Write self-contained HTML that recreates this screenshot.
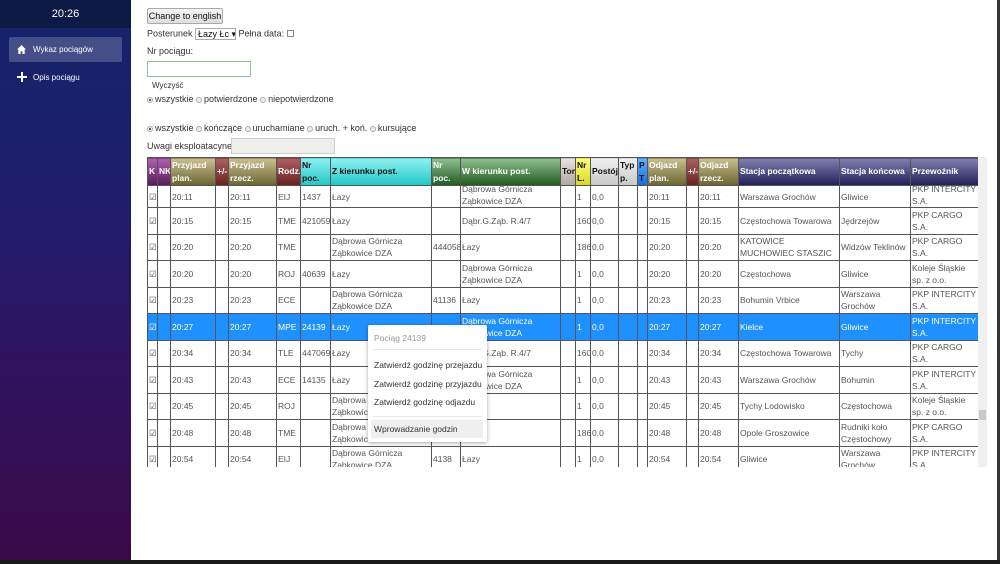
<!DOCTYPE html>
<html><head><meta charset="utf-8"><style>
*{box-sizing:border-box;margin:0;padding:0}
body{width:1000px;height:564px;overflow:hidden;background:#fff;font-family:"Liberation Sans",Arial,sans-serif;font-size:9px;color:#333;position:relative}
#side{position:absolute;left:0;top:0;width:131px;height:560px;background:linear-gradient(#14246a 0%,#1f1e6c 35%,#2f1460 65%,#3a0a47 100%)}
#side .hd{height:28px;background:#0d1a45;color:#fff;font-size:11px;text-align:center;line-height:28px}
.nav{position:absolute;left:9px;width:113px;height:25px;color:#fff;font-size:8px;line-height:25px;padding-left:24px;border-radius:2px}
.nav.a{background:rgba(255,255,255,0.2)}
#bot{position:absolute;left:0;top:560px;width:1000px;height:4px;background:#1a1a1a}
#rb{position:absolute;left:997px;top:0;width:3px;height:564px;background:#333}
.t{position:absolute;font-size:9px;color:#333;white-space:nowrap}
.btn{position:absolute;left:147px;top:8px;width:76px;height:16px;border:1px solid #aaa;background:linear-gradient(#f6f6f6,#dedede);font-size:9px;line-height:14px;text-align:center;border-radius:2px;color:#111}
.rad{display:inline-block;width:6px;height:6px;border:1px solid #aaa;border-radius:50%;vertical-align:-1px;margin-right:2px;background:#eee}
.rad.on{background:radial-gradient(#555 35%,#eee 45%)}
#tw{position:absolute;left:147px;top:157px;width:841px;height:310px;overflow:hidden}
table{border-collapse:collapse;table-layout:fixed;width:831px;font-size:8.5px}
td,th{border:1px solid #555;height:26.5px;padding:0 1px;overflow:hidden;white-space:nowrap;line-height:12px;color:#555;font-weight:normal;text-align:left}
th{height:28px;font-weight:bold;color:#fff;white-space:normal;vertical-align:middle;line-height:13px}
tr.f td{height:22px}
.cl{height:21px;overflow:hidden;display:flex;flex-direction:column;justify-content:flex-end}
td.w{white-space:normal}
tr.sel td{background:#1e90ff;color:#fff}
.pu{background:linear-gradient(#b060b0,#5a1a5a)}
.ol{background:linear-gradient(#c8c090,#6a6430)}
.mr{background:linear-gradient(#b06060,#6a2020)}
.cy{background:linear-gradient(#8ff0f0,#20c8c8);color:#111!important}
.gr{background:linear-gradient(#90c090,#1f5a1f)}
.gy{background:linear-gradient(#e8e4e0,#b0a8a0);color:#111!important}
.ye{background:linear-gradient(#ffff80,#d8d820);color:#111!important}
.lg{background:linear-gradient(#f0f0f0,#c8c8c8);color:#111!important}
.bl{background:linear-gradient(#60b0ff,#1070e0);color:#111!important}
.nv{background:linear-gradient(#8080b0,#20205a)}
#sb{position:absolute;left:978px;top:157px;width:9px;height:310px;background:#f0f0f0}
#menu{position:absolute;left:368px;top:325px;width:119px;height:117px;background:#fff;box-shadow:0 1px 4px rgba(0,0,0,0.35);border-radius:2px;font-size:8.5px;color:#333}
#menu div{position:absolute;left:6px;white-space:nowrap}
.sel1{display:inline-block;border:1px solid #aaa;padding:0 2px;width:41px;height:12px;line-height:10px;color:#111;vertical-align:middle;white-space:nowrap;overflow:hidden}
</style></head><body>
<div id="side"><div class="hd">20:26</div>
<div class="nav a" style="top:37px"><svg style="position:absolute;left:8px;top:8px" width="9" height="9" viewBox="0 0 10 10"><path d="M5 0L0 5h1.5v5h2.5V7h2v3h2.5V5H10z" fill="#fff"/></svg>Wykaz pociągów</div>
<div class="nav" style="top:65px"><svg style="position:absolute;left:8px;top:7px" width="10" height="10" viewBox="0 0 10 10"><path d="M4 0h2v4h4v2H6v4H4V6H0V4h4z" fill="#fff"/></svg>Opis pociągu</div>
</div>
<div class="btn">Change to english</div>
<div class="t" style="left:147px;top:28px">Posterunek <span class="sel1">Łazy Łc ▾</span> Pełna data: <span style="display:inline-block;width:7px;height:7px;border:1px solid #888;vertical-align:-1px"></span></div>
<div class="t" style="left:147px;top:46px">Nr pociągu:</div>
<div style="position:absolute;left:147px;top:61px;width:104px;height:16px;border:1px solid #8ac48a"></div>
<div class="t" style="left:152px;top:81px;font-size:8px">Wyczyść</div>
<div class="t" style="left:147px;top:94px"><span class="rad on"></span>wszystkie <span class="rad"></span>potwierdzone <span class="rad"></span>niepotwierdzone</div>
<div class="t" style="left:147px;top:123px"><span class="rad on"></span>wszystkie <span class="rad"></span>kończące <span class="rad"></span>uruchamiane <span class="rad"></span>uruch. + koń. <span class="rad"></span>kursujące</div>
<div class="t" style="left:147px;top:141px">Uwagi eksploatacyne:</div>
<div style="position:absolute;left:231px;top:138px;width:104px;height:16px;border:1px solid #ccc;background:#eeeeea"></div>
<div id="tw"><table>
<colgroup><col style="width:10px"><col style="width:13px"><col style="width:45px"><col style="width:13px"><col style="width:48px"><col style="width:24px"><col style="width:30px"><col style="width:101px"><col style="width:29px"><col style="width:100px"><col style="width:15px"><col style="width:15px"><col style="width:28px"><col style="width:19px"><col style="width:10px"><col style="width:39px"><col style="width:12px"><col style="width:40px"><col style="width:101px"><col style="width:71px"><col style="width:68px"></colgroup>
<tr><th class="pu">K</th><th class="pu">NK</th><th class="ol">Przyjazd plan.</th><th class="mr">+/-</th><th class="ol">Przyjazd rzecz.</th><th class="mr">Rodz.</th><th class="cy">Nr poc.</th><th class="cy">Z kierunku post.</th><th class="gr">Nr poc.</th><th class="gr">W kierunku post.</th><th class="gy">Tor</th><th class="ye">Nr L.</th><th class="lg">Postój</th><th class="lg">Typ p.</th><th class="bl">P T</th><th class="ol">Odjazd plan.</th><th class="mr">+/-</th><th class="ol">Odjazd rzecz.</th><th class="nv">Stacja początkowa</th><th class="nv">Stacja końcowa</th><th class="nv">Przewoźnik</th></tr>
<tr class="f"><td>☑</td><td></td><td>20:11</td><td></td><td>20:11</td><td>EIJ</td><td>1437</td><td>Łazy</td><td></td><td class="w"><div class="cl"><span>Dąbrowa Górnicza Ząbkowice DZA</span></div></td><td></td><td>1</td><td>0,0</td><td></td><td></td><td>20:11</td><td></td><td>20:11</td><td>Warszawa Grochów</td><td>Gliwice</td><td class="w"><div class="cl"><span>PKP INTERCITY S.A.</span></div></td></tr>
<tr><td>☑</td><td></td><td>20:15</td><td></td><td>20:15</td><td>TME</td><td>421059</td><td>Łazy</td><td></td><td>Dąbr.G.Ząb. R.4/7</td><td></td><td>160</td><td>0,0</td><td></td><td></td><td>20:15</td><td></td><td>20:15</td><td>Częstochowa Towarowa</td><td>Jędrzejów</td><td class="w">PKP CARGO S.A.</td></tr>
<tr><td>☑</td><td></td><td>20:20</td><td></td><td>20:20</td><td>TME</td><td></td><td class="w">Dąbrowa Górnicza Ząbkowice DZA</td><td>444058</td><td>Łazy</td><td></td><td>186</td><td>0,0</td><td></td><td></td><td>20:20</td><td></td><td>20:20</td><td class="w">KATOWICE MUCHOWIEC STASZIC</td><td>Widzów Teklinów</td><td class="w">PKP CARGO S.A.</td></tr>
<tr><td>☑</td><td></td><td>20:20</td><td></td><td>20:20</td><td>ROJ</td><td>40639</td><td>Łazy</td><td></td><td class="w">Dąbrowa Górnicza Ząbkowice DZA</td><td></td><td>1</td><td>0,0</td><td></td><td></td><td>20:20</td><td></td><td>20:20</td><td>Częstochowa</td><td>Gliwice</td><td class="w">Koleje Śląskie sp. z o.o.</td></tr>
<tr><td>☑</td><td></td><td>20:23</td><td></td><td>20:23</td><td>ECE</td><td></td><td class="w">Dąbrowa Górnicza Ząbkowice DZA</td><td>41136</td><td>Łazy</td><td></td><td>1</td><td>0,0</td><td></td><td></td><td>20:23</td><td></td><td>20:23</td><td>Bohumin Vrbice</td><td class="w">Warszawa Grochów</td><td class="w">PKP INTERCITY S.A.</td></tr>
<tr class="sel"><td>☑</td><td></td><td>20:27</td><td></td><td>20:27</td><td>MPE</td><td>24139</td><td>Łazy</td><td></td><td class="w">Dąbrowa Górnicza Ząbkowice DZA</td><td></td><td>1</td><td>0,0</td><td></td><td></td><td>20:27</td><td></td><td>20:27</td><td>Kielce</td><td>Gliwice</td><td class="w">PKP INTERCITY S.A.</td></tr>
<tr><td>☑</td><td></td><td>20:34</td><td></td><td>20:34</td><td>TLE</td><td>447069</td><td>Łazy</td><td></td><td>Dąbr.G.Ząb. R.4/7</td><td></td><td>160</td><td>0,0</td><td></td><td></td><td>20:34</td><td></td><td>20:34</td><td>Częstochowa Towarowa</td><td>Tychy</td><td class="w">PKP CARGO S.A.</td></tr>
<tr><td>☑</td><td></td><td>20:43</td><td></td><td>20:43</td><td>ECE</td><td>14135</td><td>Łazy</td><td></td><td class="w">Dąbrowa Górnicza Ząbkowice DZA</td><td></td><td>1</td><td>0,0</td><td></td><td></td><td>20:43</td><td></td><td>20:43</td><td>Warszawa Grochów</td><td>Bohumin</td><td class="w">PKP INTERCITY S.A.</td></tr>
<tr><td>☑</td><td></td><td>20:45</td><td></td><td>20:45</td><td>ROJ</td><td></td><td class="w">Dąbrowa Górnicza Ząbkowice DZA</td><td></td><td></td><td></td><td>1</td><td>0,0</td><td></td><td></td><td>20:45</td><td></td><td>20:45</td><td>Tychy Lodowisko</td><td>Częstochowa</td><td class="w">Koleje Śląskie sp. z o.o.</td></tr>
<tr><td>☑</td><td></td><td>20:48</td><td></td><td>20:48</td><td>TME</td><td></td><td class="w">Dąbrowa Górnicza Ząbkowice DZA</td><td></td><td></td><td></td><td>186</td><td>0,0</td><td></td><td></td><td>20:48</td><td></td><td>20:48</td><td>Opole Groszowice</td><td class="w">Rudniki koło Częstochowy</td><td class="w">PKP CARGO S.A.</td></tr>
<tr><td>☑</td><td></td><td>20:54</td><td></td><td>20:54</td><td>EIJ</td><td></td><td class="w">Dąbrowa Górnicza Ząbkowice DZA</td><td>4138</td><td>Łazy</td><td></td><td>1</td><td>0,0</td><td></td><td></td><td>20:54</td><td></td><td>20:54</td><td>Gliwice</td><td class="w">Warszawa Grochów</td><td class="w">PKP INTERCITY S.A.</td></tr>
</table></div>
<div id="sb"><div style="position:absolute;left:1px;top:253px;width:7px;height:10px;background:#c8c8c8"></div></div>
<div id="menu">
<div style="top:8px;color:#999">Pociąg 24139</div>
<div style="top:24px;left:5px;width:109px;height:1px;background:#e8e8e8"></div>
<div style="top:35px">Zatwierdź godzinę przejazdu</div>
<div style="top:54px">Zatwierdź godzinę przyjazdu</div>
<div style="top:72px">Zatwierdź godzinę odjazdu</div>
<div style="top:91px;left:5px;width:109px;height:1px;background:#e8e8e8"></div>
<div style="top:95px;left:3px;width:112px;height:18px;background:#efefef;padding:4px 3px">Wprowadzanie godzin</div>
</div>
<div id="rb"></div><div id="bot"></div>
</body></html>
